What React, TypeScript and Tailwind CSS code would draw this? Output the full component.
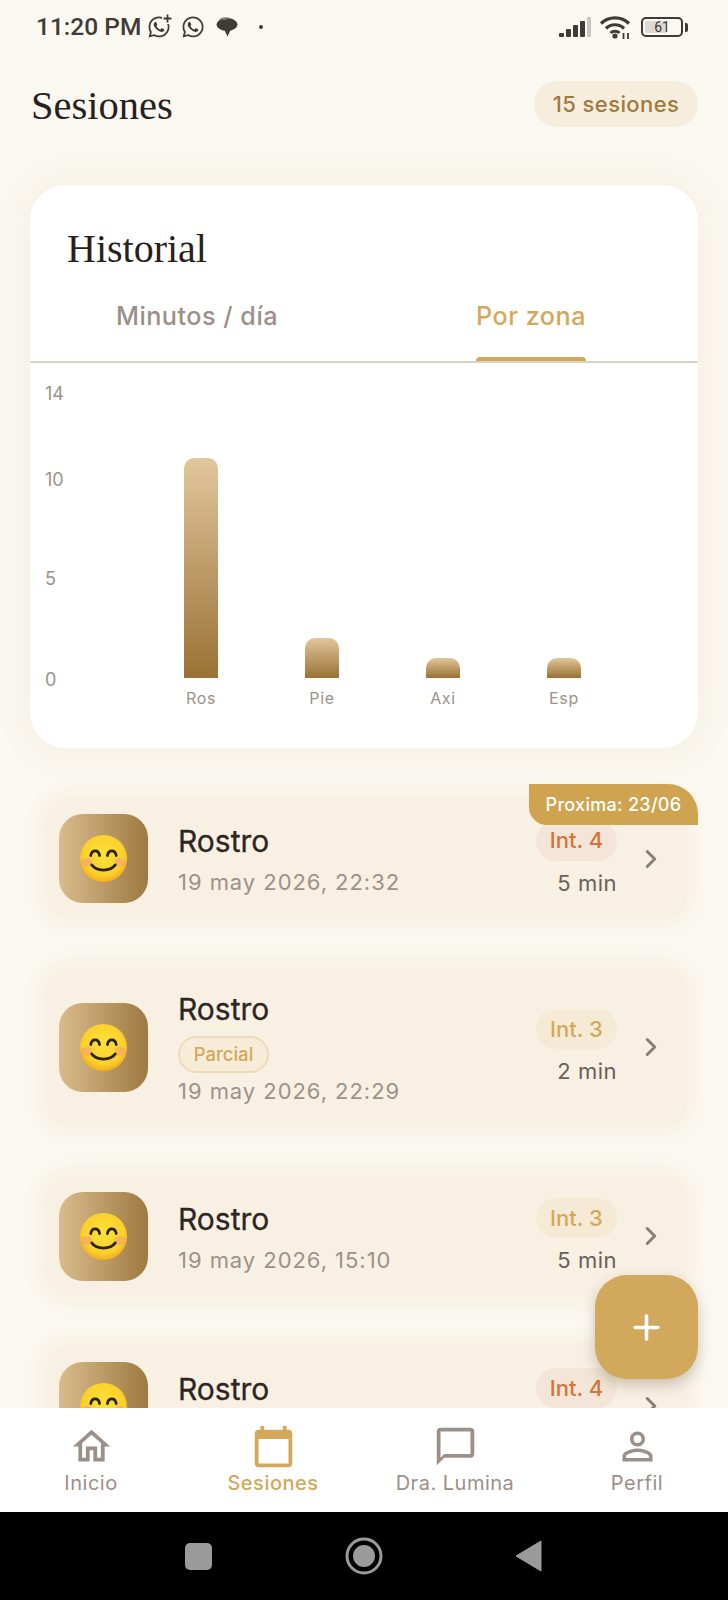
import React from "react";
import { ChevronRight, Plus } from "lucide-react";
import { FaWhatsapp } from "react-icons/fa";
import { MdCalendarToday, MdChatBubbleOutline, MdOutlineHome, MdPersonOutline } from "react-icons/md";

type Session = {
  zone: string;
  date?: string;
  intensity: number;
  minutes?: number;
  partial?: boolean;
  next?: string;
};

// last row is cut by the nav, only its top shows
const sessions: Session[] = [
  { zone: "Rostro", date: "19 may 2026, 22:32", intensity: 4, minutes: 5, next: "Proxima: 23/06" },
  { zone: "Rostro", date: "19 may 2026, 22:29", intensity: 3, minutes: 2, partial: true },
  { zone: "Rostro", date: "19 may 2026, 15:10", intensity: 3, minutes: 5 },
  { zone: "Rostro", intensity: 4 },
];

const bars = [
  { label: "Ros", h: "h-[220px]" },
  { label: "Pie", h: "h-[40px]" },
  { label: "Axi", h: "h-[20px]" },
  { label: "Esp", h: "h-[20px]" },
];

function Smiley() {
  return (
    <svg width="49" height="49" viewBox="0 0 50 50">
      <defs>
        <radialGradient id="face" cx="50%" cy="42%" r="58%">
          <stop offset="0%" stopColor="#fde13a" />
          <stop offset="75%" stopColor="#fbd02c" />
          <stop offset="100%" stopColor="#f3ae1c" />
        </radialGradient>
      </defs>
      <circle cx="25" cy="25" r="24" fill="url(#face)" />
      <ellipse cx="8" cy="29" rx="5.5" ry="4.5" fill="#f59a7c" opacity="0.55" />
      <ellipse cx="42" cy="29" rx="5.5" ry="4.5" fill="#f59a7c" opacity="0.55" />
      <path d="M12 22 C13 15.500 20 15.500 21 22" fill="none" stroke="#2e2312" strokeWidth="2.800" strokeLinecap="round" />
      <path d="M29 22 C30 15.500 37 15.500 38 22" fill="none" stroke="#2e2312" strokeWidth="2.800" strokeLinecap="round" />
      <path d="M13 31.500 C18 38.500 32 38.500 37 31.500" fill="none" stroke="#2e2312" strokeWidth="2.800" strokeLinecap="round" />
    </svg>
  );
}

function StatusBar() {
  return (
    <div className="flex h-[54px] shrink-0 items-center pl-[36px] pr-[40px] text-[#3f3b38]">
      <span className="font-['Roboto',sans-serif] text-[24.500px] font-medium leading-none">11:20 PM</span>
      <span className="relative ml-[6px]">
        <FaWhatsapp size={24} />
        <svg className="absolute -right-[2px] -top-[2px]" width="11" height="11" viewBox="0 0 11 11">
          <rect width="11" height="11" fill="#fbf8f1" />
          <path d="M5.500 1.500v8M1.500 5.500h8" stroke="#3f3b38" strokeWidth="1.800" />
        </svg>
      </span>
      <FaWhatsapp size={24} className="ml-[10px]" />
      <svg className="ml-[11px]" width="22" height="22" viewBox="0 0 22 22">
        <ellipse cx="11" cy="8.500" rx="10.500" ry="6.500" fill="#3f3b38" />
        <path d="M3 3.500 C6 1 11 0.500 14 2L9 4z" fill="#7a7672" />
        <path d="M8 13h7l-3.500 7.500z" fill="#3f3b38" />
      </svg>
      <span className="ml-[21px] h-[4px] w-[4px] rounded-full bg-[#3f3b38]" />
      <span className="flex-1" />
      <svg width="33" height="22" viewBox="0 0 33 22" className="translate-x-[2px]">
        <rect x="0" y="17" width="5" height="4" rx="1" fill="#3f3b38" />
        <rect x="7" y="13" width="5" height="8" rx="1" fill="#3f3b38" />
        <rect x="14" y="9" width="5" height="12" rx="1" fill="#3f3b38" />
        <rect x="21" y="5" width="5" height="16" rx="1" fill="#3f3b38" />
        <rect x="28" y="1" width="4" height="20" rx="1" fill="#c9c6c1" />
      </svg>
      <svg className="ml-[9px]" width="32" height="24" viewBox="0 0 32 24">
        <path d="M2 8.500C9.500 1 22.500 1 30 8.500" fill="none" stroke="#3f3b38" strokeWidth="3.200" />
        <path d="M7 13.500C12 8.500 20 8.500 25 13.500" fill="none" stroke="#3f3b38" strokeWidth="3.200" />
        <path d="M11.500 18C14 15.500 18 15.500 20.500 18" fill="none" stroke="#3f3b38" strokeWidth="3" />
        <circle cx="16" cy="21" r="2.600" fill="#3f3b38" />
        <path d="M24.500 18v6M29 18v6" stroke="#3f3b38" strokeWidth="1.800" />
      </svg>
      <span className="relative ml-[10px] flex h-[20px] w-[42px] items-center justify-center rounded-[5px] border-2 border-[#3f3b38]">
        <span className="absolute inset-y-[2px] left-[2px] w-[22px] rounded-[2px] bg-[#dcdad6]" />
        <span className="relative font-['Roboto',sans-serif] text-[14px] leading-none">61</span>
      </span>
      <span className="ml-[2px] h-[9px] w-[3px] rounded-r-[2px] bg-[#3f3b38]" />
    </div>
  );
}

function Chart() {
  return (
    <div className="flex">
      <div className="w-[110px] shrink-0 pl-[15px] pt-[20px] text-[18px] leading-[22px] text-[#9c928a]">
        <div>14</div>
        <div className="mt-[64px]">10</div>
        <div className="mt-[77px]">5</div>
        <div className="mt-[79px]">0</div>
      </div>
      <div className="flex h-[345px] items-end">
        {bars.map((b) => (
          <div key={b.label} className="flex w-[121px] flex-col items-center">
            <div className={`w-[34px] rounded-t-[10px] bg-gradient-to-b from-[#e2c79c] to-[#9a7235] ${b.h}`} />
            <div className="ml-[1px] mt-[10px] text-[16px] leading-[20px] tracking-[0.7px] text-[#9c928a]">{b.label}</div>
          </div>
        ))}
      </div>
    </div>
  );
}

function SessionRow({ s }: { s: Session }) {
  const high = s.intensity >= 4;
  return (
    <div
      className={`relative ml-[17px] mr-[12px] flex items-center rounded-[24px] bg-[#f7f0e3] pl-[12px] pr-[20px] shadow-[0_0_16px_8px_#f7f0e3] ${
        s.partial ? "h-[158px]" : s.next ? "h-[119px]" : "h-[120px]"
      }`}
    >
      <div className="flex h-[89px] w-[89px] shrink-0 items-center justify-center rounded-[24px] bg-gradient-to-r from-[#d9bc8c] to-[#9e7a42]">
        <Smiley />
      </div>
      <div className="ml-[30px] flex-1 pt-[3px]">
        <div className="text-[30px] font-normal leading-[36px] text-[#2e2620] [-webkit-text-stroke:0.3px_#2e2620]">{s.zone}</div>
        {s.partial && (
          <div className="mb-[3px] mt-[9px] flex h-[37px] w-[91px] items-center justify-center rounded-full border-2 border-[#ecdcb8] bg-[#f6ecd8] text-[18.500px] font-medium text-[#d4a85a]">
            Parcial
          </div>
        )}
        <div className={`h-[30px] text-[22px] leading-[30px] tracking-[0.95px] text-[#9c928a] ${s.partial ? "" : "mt-[8px]"}`}>{s.date}</div>
      </div>
      <div className="flex flex-col items-end">
        <div
          className={`flex h-[40px] w-[81px] items-center justify-center rounded-full text-[22px] font-medium ${
            high ? "bg-[#f3e6d8] text-[#d4743a]" : "bg-[#f5ead6] text-[#d4a85a]"
          }`}
        >
          Int. {s.intensity}
        </div>
        <div className="mt-[8px] h-[28px] text-[22px] leading-[28px] tracking-[0.5px] text-[#6b5f58]">
          {s.minutes ? `${s.minutes} min` : ""}
        </div>
      </div>
      <ChevronRight size={30} strokeWidth={2.400} className="ml-[19px] text-[#8a7f78]" />
      {s.next && (
        <div className="absolute right-[-12px] top-[-15px] flex h-[41px] w-[169px] items-center justify-center rounded-bl-[18px] rounded-tr-[30px] bg-[#cfa350] text-[18px] font-medium tracking-[0.3px] text-white">
          {s.next}
        </div>
      )}
    </div>
  );
}

function NavItem({ icon, label, active }: { icon: React.ReactNode; label: string; active?: boolean }) {
  return (
    <div className={`flex w-[182px] flex-col items-center ${active ? "text-[#d4a85a]" : "text-[#9c8f88]"}`}>
      {icon}
      <span className={`mt-[1px] text-[20px] leading-[26px] tracking-[0.5px] ${active ? "font-medium" : ""}`}>{label}</span>
    </div>
  );
}

export default function App() {
  return (
    <div className="relative flex h-[1600px] w-[728px] flex-col overflow-hidden bg-[#fbf8f1] font-['Inter',sans-serif]">
      <StatusBar />

      <div className="flex h-[96px] shrink-0 items-center justify-between pl-[31px] pr-[30px] pt-[4px]">
        <h1 className="pt-[4px] font-['Liberation_Serif',serif] text-[40.500px] font-normal leading-none text-[#26211d]">Sesiones</h1>
        <div className="flex h-[46px] w-[164px] items-center justify-center rounded-full bg-[#f6eddd] text-[22px] font-medium tracking-[0.4px] text-[#a07a3c]">
          15 sesiones
        </div>
      </div>

      <div className="flex-1 overflow-hidden px-[30px] pt-[35px]">
        <section className="h-[563px] overflow-hidden rounded-[36px] bg-white shadow-[0_0_30px_8px_#f6f1e6]">
          <h2 className="pl-[37px] pt-[40px] font-['Liberation_Serif',serif] text-[40px] font-normal leading-[48px] text-[#26211d]">Historial</h2>
          <div className="mt-[20px] flex h-[70px] border-b-2 border-[#d8d4c4]">
            <div className="flex w-1/2 justify-center pt-[5px] text-[25.200px] font-medium tracking-[0.5px] text-[#9c8f88]">Minutos / día</div>
            <div className="flex w-1/2 flex-col items-center justify-between pt-[5px] text-[25.200px] font-medium tracking-[0.5px] text-[#d4a85a]">
              <span>Por zona</span>
              <span className="h-[4px] w-[110px] rounded-t-[4px] bg-[#d4a85a]" />
            </div>
          </div>
          <Chart />
        </section>

        <div className="mt-[51px] flex flex-col gap-[50px]">
          {sessions.map((s, i) => (
            <SessionRow key={i} s={s} />
          ))}
        </div>
      </div>

      <button className="absolute left-[595px] top-[1275px] flex h-[104px] w-[103px] items-center justify-center rounded-[32px] bg-[#d2a85c] text-white shadow-[0_6px_14px_rgba(90,70,40,0.28)]">
        <Plus size={39} strokeWidth={2.200} />
      </button>

      <nav className="relative flex h-[104px] shrink-0 items-center bg-white">
        <NavItem icon={<MdOutlineHome size={45} />} label="Inicio" />
        <NavItem icon={<MdCalendarToday size={45} />} label="Sesiones" active />
        <NavItem icon={<MdChatBubbleOutline size={45} />} label="Dra. Lumina" />
        <NavItem icon={<MdPersonOutline size={45} />} label="Perfil" />
      </nav>

      <div className="relative flex h-[88px] shrink-0 items-center bg-black pl-[185px]">
        <span className="h-[27px] w-[27px] rounded-[5px] bg-[#9a9a9a]" />
        <svg className="ml-[133px]" width="38" height="38" viewBox="0 0 38 38">
          <circle cx="19" cy="19" r="17" fill="none" stroke="#9a9a9a" strokeWidth="3" />
          <circle cx="19" cy="19" r="11" fill="#9a9a9a" />
        </svg>
        <svg className="ml-[132px]" width="27" height="32" viewBox="0 0 27 32">
          <path d="M26 1v30L1 16z" fill="#9a9a9a" stroke="#9a9a9a" strokeLinejoin="round" />
        </svg>
      </div>
    </div>
  );
}
